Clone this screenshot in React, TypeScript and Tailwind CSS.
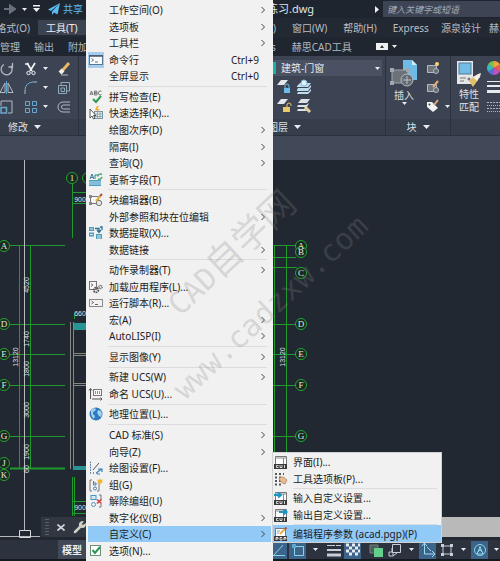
import React, { useState } from 'react';

type MenuEntry = {
  label: string;
  icon?: string;
  shortcut?: string;
  submenu?: boolean;
};

const toolsMenu: MenuEntry[][] = [
  [
    { label: '工作空间(O)', submenu: true },
    { label: '选项板', submenu: true },
    { label: '工具栏', submenu: true },
    { label: '命令行', icon: 'cmdline', shortcut: 'Ctrl+9' },
    { label: '全屏显示', shortcut: 'Ctrl+0' },
  ],
  [
    { label: '拼写检查(E)', icon: 'spell' },
    { label: '快速选择(K)...', icon: 'quickselect' },
    { label: '绘图次序(D)', submenu: true },
    { label: '隔离(I)', submenu: true },
    { label: '查询(Q)', submenu: true },
    { label: '更新字段(T)', icon: 'field' },
  ],
  [
    { label: '块编辑器(B)', icon: 'block' },
    { label: '外部参照和块在位编辑', submenu: true },
    { label: '数据提取(X)...', icon: 'extract' },
    { label: '数据链接', submenu: true },
  ],
  [
    { label: '动作录制器(T)', submenu: true },
    { label: '加载应用程序(L)...', icon: 'load' },
    { label: '运行脚本(R)...', icon: 'script' },
    { label: '宏(A)', submenu: true },
    { label: 'AutoLISP(I)', submenu: true },
  ],
  [{ label: '显示图像(Y)', submenu: true }],
  [
    { label: '新建 UCS(W)', submenu: true },
    { label: '命名 UCS(U)...', icon: 'ucs' },
  ],
  [{ label: '地理位置(L)...', icon: 'globe' }],
  [
    { label: 'CAD 标准(S)', submenu: true },
    { label: '向导(Z)', submenu: true },
    { label: '绘图设置(F)...', icon: 'drafting' },
    { label: '组(G)', icon: 'group' },
    { label: '解除编组(U)', icon: 'ungroup' },
    { label: '数字化仪(B)', submenu: true },
    { label: '自定义(C)', submenu: true },
    { label: '选项(N)...', icon: 'options' },
  ],
];

const customizeMenu: MenuEntry[][] = [
  [
    { label: '界面(I)...', icon: 'cui' },
    { label: '工具选项板(P)...', icon: 'palette' },
  ],
  [
    { label: '输入自定义设置...', icon: 'import' },
    { label: '输出自定义设置...', icon: 'export' },
  ],
  [{ label: '编辑程序参数 (acad.pgp)(P)', icon: 'pgp' }],
];

// The small window with a "CUI" style footer shared by the customize icons
const CuiFrame = () => (
  <>
    <path d="M2.500 9V1.500h11V9" fill="#fff" stroke="#777" />
    <path d="M2 3h12M10.500 3v6" stroke="#888" fill="none" />
    <rect x="1" y="9" width="13" height="5" fill="#3a3a3a" />
    <path d="M5.500 10.500H3.500v2h2M7 10v2.500h2V10M11.500 10v3" stroke="#fff" fill="none" strokeWidth=".8" />
  </>
);

const menuIcons: Record<string, React.ReactNode> = {
  cmdline: (
    <>
      <rect x="1.500" y="2.500" width="13" height="9" fill="#f7fafc" stroke="#5b7893" />
      <path d="M1 3h14" stroke="#40566c" strokeWidth="1.500" />
      <path d="m3.500 5.500 2 1.500-2 1.500M7 9h3" stroke="#444" fill="none" strokeWidth=".8" />
    </>
  ),
  spell: (
    <>
      <path d="m2 5 1.500-4L5 5M2.500 4h2M6.500 1v4h1.800a1 1 0 0 0 0-2H6.500h1.500a1 1 0 0 0 0-2ZM13.500 1.500a2 2 0 1 0 0 3" stroke="#666" fill="none" strokeWidth=".9" />
      <path d="m5 9 3 3 5-6" stroke="#2f9a56" strokeWidth="2" fill="none" />
    </>
  ),
  quickselect: (
    <>
      <path d="m9 0-2 4h2L7 7l5-4H9l2-3Z" fill="#f6a821" />
      <rect x="6.500" y="5.500" width="8" height="7" fill="#e3ebee" stroke="#7d97a0" />
      <path d="M7 8h8M7 10.500h8M9.500 6v7M12 6v7" stroke="#7d97a0" strokeWidth=".7" />
      <path d="M2 3v9l2-2 1.500 3 1.500-.8L5.500 9.500H8Z" fill="#fff" stroke="#333" strokeWidth=".8" />
    </>
  ),
  field: (
    <>
      <path d="M1 7h12v6H1Z" fill="#4da0c4" />
      <path d="M1 9h12M1 11h12" stroke="#d9eef6" strokeWidth=".8" />
      <path d="m2 6 2-5 2 5M3 4.500h2M7 6V2h3" stroke="#387c99" fill="none" />
      <path d="M9.500 3.500A3 3 0 0 1 14 1.500M14 4a3 3 0 0 1-4 2" stroke="#47a86b" strokeWidth="1.500" fill="none" />
    </>
  ),
  block: (
    <>
      <path d="M2.500 3.500h8v7h-8Z" fill="#f5f5f5" stroke="#777" />
      <path d="M1 2h3v3H1ZM1 9h3v3H1Z" fill="#888" />
      <circle cx="11" cy="10" r="2.700" fill="#dfe6ea" stroke="#777" />
      <path d="m8 8 4.500-5" stroke="#e0b43a" strokeWidth="2" />
      <path d="m12 3 2-2" stroke="#b0484c" strokeWidth="2" />
    </>
  ),
  extract: (
    <>
      <path d="M1 1h5v4H1ZM1 6.500h5v4H1ZM8 8h6v5H8Z" fill="#4f9cba" />
      <path d="M7 2.500h4v3M9 4l2 2.500L13 4M12 1h2v3" stroke="#2a6f8e" fill="none" strokeWidth="1.300" />
      <path d="M2 3h3M2 8.500h3M9 10h4M9 12h4M5 12l2 1" stroke="#e8f5fa" strokeWidth=".9" />
    </>
  ),
  load: (
    <>
      <rect x="1.500" y="1.500" width="7" height="8" fill="#f7f7f7" stroke="#777" />
      <path d="m3 3.500 2 1.500-2 1.500" stroke="#555" fill="none" strokeWidth=".8" />
      <circle cx="8" cy="10" r="2.300" fill="none" stroke="#555" strokeWidth="1.800" strokeDasharray="1.500 .6" />
      <circle cx="12.500" cy="7" r="1.600" fill="none" stroke="#666" strokeWidth="1.400" strokeDasharray="1 .5" />
    </>
  ),
  script: (
    <>
      <rect x="1.500" y="3.500" width="13" height="7" fill="#f2f2f2" stroke="#888" />
      <path d="m3.500 5 2 1.500-2 1.500M7 8.500h3" stroke="#444" fill="none" strokeWidth=".8" />
    </>
  ),
  ucs: (
    <>
      <path d="M2.500 12V2M1 3.500 2.500 1.500 4 3.500M4 12h10M12.500 10.500l1.500 1.500-1.500 1.500" stroke="#555" fill="none" />
      <rect x="5.500" y="2.500" width="8" height="6" fill="#fafafa" stroke="#777" />
      <path d="M7.500 4v3M9.500 4v3M11.500 4v3" stroke="#777" strokeWidth=".8" />
    </>
  ),
  globe: (
    <>
      <circle cx="8" cy="7" r="6.500" fill="#2f78bd" />
      <path d="M3 3c2-2 4-2 5-1l-1 2-2 1v2l2 2-1 3-2-2-1-3ZM10 3l3 1 1 3-1 3-2-1-2-3Z" fill="#9ed2ea" />
    </>
  ),
  drafting: (
    <>
      <path d="M2 1.500h1M2 4h1M2 6.500h1M2 9h1M2 12h1M5 12h1M8 12h1" stroke="#3f6b94" strokeWidth="1.300" />
      <path d="m5 9 6-7" stroke="#555" />
      <path d="M9 11.500 13.500 8M10 8h4v3M9 13h3" stroke="#3880b3" strokeWidth="1.200" fill="none" />
    </>
  ),
  group: (
    <>
      <path d="M4 2H2v11h2M11 5v8H9" stroke="#777" fill="none" />
      <path d="M5.500 3v4h2.500V5H5.500" stroke="#4f7fa3" fill="none" />
      <circle cx="7" cy="10.500" r="1.500" stroke="#4f7fa3" fill="none" />
      <path d="m12 0 .8 2 2.200-.5-1.200 2L15 5l-2-.2L12 7l-.8-2.200L9 5l1.200-1.500L9 1.500l2.200.5Z" fill="#f0b32c" />
    </>
  ),
  ungroup: (
    <>
      <path d="M11 1h2v5M13 10v3h-2" stroke="#777" fill="none" />
      <rect x="3" y="1.500" width="5" height="4" fill="#d5e9f7" stroke="#4993c8" />
      <circle cx="5.500" cy="10.500" r="2" fill="none" stroke="#5c8fb5" />
      <path d="m9 5.500 4.500 4M13.500 5.500l-4.500 4" stroke="#cf3d44" strokeWidth="1.600" />
    </>
  ),
  options: (
    <>
      <rect x="2.500" y="1.500" width="10" height="10" fill="#fff" stroke="#6b8f79" />
      <path d="m4.500 6 2.500 3 5-6" stroke="#2c9454" strokeWidth="2" fill="none" />
    </>
  ),
  cui: <CuiFrame />,
  palette: (
    <>
      <path d="M2 2h2M6 2h2M2 5.500h2M6 5.500h2M2 9h2M6 9h2M2 12.500h2M6 12.500h2M10 2h1" stroke="#555" strokeWidth="1.800" />
      <path d="M6 6c3-2 5-1 8 2l-2 4C9 11 7 10 6 6Z" fill="#e6bd93" stroke="#a7794d" strokeWidth=".7" />
    </>
  ),
  import: (
    <>
      <CuiFrame />
      <path d="M1 4h6M5 1.500 8 4 5 6.500" stroke="#1f95c2" strokeWidth="2" fill="none" />
    </>
  ),
  export: (
    <>
      <CuiFrame />
      <path d="M6 4h6M10.500 1.500 13.500 4l-3 2.500" stroke="#1f95c2" strokeWidth="2" fill="none" />
    </>
  ),
  pgp: (
    <>
      <path d="M2.500 9V1.500h10V9" fill="#fff" stroke="#777" />
      <rect x="1" y="9" width="13" height="5" fill="#3a3a3a" />
      <path d="M3 13v-2.500h2V12H3M9 10.500H7V13h2v-1.500M11 13v-2.500h2V12h-2" stroke="#fff" fill="none" strokeWidth=".8" />
      <path d="m7 7 5-5" stroke="#e3b04b" strokeWidth="2" />
      <path d="m12 2 1.500-1.500" stroke="#b8434a" strokeWidth="2" />
      <path d="M4 4h3M4 6h2" stroke="#999" />
    </>
  ),
};

const Caret = ({ small }: { small?: boolean }) => (
  <svg className={small ? 'h-[3px] w-[5px] shrink-0' : 'h-1 w-[7px] shrink-0'} viewBox="0 0 7 4" aria-hidden="true">
    <path d="M0 0h7L3.500 4Z" fill="#e8ebef" />
  </svg>
);

type MenuProps = { groups: MenuEntry[][]; active: string; onSelect: (label: string) => void; name: string };

const MenuList: React.FC<MenuProps & { rowClass: string; gapClass: string; textClass: string }> = ({
  groups, active, onSelect, name, rowClass, gapClass, textClass,
}) => (
  <div role="menu" aria-label={name} className="flex min-h-0 flex-1 flex-col">
    {groups.map((group, i) => (
      <React.Fragment key={i}>
        {i > 0 && (
          <div role="separator" className={`flex items-center pr-1 pl-5 ${gapClass}`}>
            <div className="h-px w-full bg-[#dcdcdc]" />
          </div>
        )}
        {group.map((entry) => (
          <button
            key={entry.label}
            role="menuitem"
            onClick={() => onSelect(entry.label)}
            className={`flex w-full items-center text-left text-[#1c1c1c] ${rowClass} ${active === entry.label ? 'bg-[#91c9f7]' : ''}`}
          >
            <span className={`flex h-4 w-4 shrink-0 items-center justify-center ${entry.icon === 'cmdline' ? 'bg-[#a6cdee]' : ''}`}>
              {entry.icon && <svg className="h-[14px] w-4" viewBox="0 0 16 14">{menuIcons[entry.icon]}</svg>}
            </span>
            <span className={`flex-1 whitespace-nowrap ${textClass}`}>{entry.label}</span>
            {entry.shortcut && <span className="pr-3">{entry.shortcut}</span>}
            {entry.submenu && (
              <svg className="mr-1 h-2 w-2" viewBox="0 0 8 8"><path d="m2.500 1 3 3-3 3" fill="none" stroke="#444" /></svg>
            )}
          </button>
        ))}
      </React.Fragment>
    ))}
  </div>
);

const TitleBar = () => (
  <header className="flex h-[18px] shrink-0 items-center bg-[#1f252e] text-[#dfe3e8]">
    <div className="flex w-[267px] shrink-0 items-center gap-[6px] pl-1">
      <svg className="h-3 w-3" viewBox="0 0 12 12"><path d="M0 6h8M6 2.500 11 6 6 9.500Z" fill="#69717d" stroke="#69717d" strokeWidth="2" /></svg>
      <div className="flex items-center gap-[6px]">
        <Caret small />
        <svg className="h-2 w-[7px]" viewBox="0 0 7 8"><path d="M0 0h7v1.500H0ZM0 3h7L3.500 7Z" fill="#eef0f2" /></svg>
      </div>
      <button className="flex items-center gap-[3px] pl-[2px] text-[#5cbcf2]">
        <svg className="h-3 w-3" viewBox="0 0 12 12"><path d="M12 0 0 6.500l3 1.500Zm0 0L4 8.500V12l2-2.500 3.500 2Z" fill="#5cbcf2" /></svg>
        共享
      </button>
    </div>
    <span className="w-[108px] shrink-0 text-[11px]">练习.dwg</span>
    <svg className="mr-1 h-[7px] w-1 shrink-0" viewBox="0 0 4 7"><path d="m0 0 4 3.500L0 7Z" fill="#eef0f2" /></svg>
    <input
      aria-label="搜索"
      placeholder="键入关键字或短语"
      className="h-4 min-w-0 flex-1 bg-[#3d4454] px-1 text-[9px] italic outline-none placeholder:text-[#a5acb8]"
    />
  </header>
);

const MenuBar = () => (
  <nav className="flex h-[19px] shrink-0 items-center bg-[#222933] text-[#b9bec6]">
    <div className="flex h-full w-[273px] shrink-0 items-center">
      <button className="flex w-[38px] shrink-0 justify-end pr-2 whitespace-nowrap">格式(O)</button>
      <button className="h-[15px] w-12 bg-[#3b4351] pl-2 text-left text-[#eceff2]">工具(T)</button>
    </div>
    <div className="flex gap-4 whitespace-nowrap">
      <button>)</button>
      <button>窗口(W)</button>
      <button>帮助(H)</button>
      <button>Express</button>
      <button className="-ml-1">源泉设计</button>
      <button className="-ml-2">赫思CAD工具</button>
    </div>
  </nav>
);

const RibbonTabs = () => (
  <nav className="flex h-[19px] shrink-0 items-center bg-[#20262f] text-[#b2b8c1]">
    <div className="flex w-[271px] shrink-0 gap-[14px]">
      <button>管理</button>
      <button>输出</button>
      <button>附加模块</button>
    </div>
    <div className="flex items-center gap-4 whitespace-nowrap">
      <button>s</button>
      <button>赫思CAD工具</button>
    </div>
    <button aria-label="最小化" className="ml-6 flex h-[7px] w-3 items-center justify-center bg-[#eef0f2]">
      <svg className="h-[3px] w-1" viewBox="0 0 4 3"><path d="M0 3h4L2 0Z" fill="#333" /></svg>
    </button>
    <div className="pl-1"><Caret small /></div>
  </nav>
);

const PanelLabel = ({ children, className = '' }: { children: React.ReactNode; className?: string }) => (
  <div className={`flex h-4 items-center gap-[6px] bg-[#363d4b] text-[#dde1e6] ${className}`}>
    <span>{children}</span>
    <Caret />
  </div>
);

const ToolButton = ({ children, label, caret }: { children: React.ReactNode; label: string; caret?: boolean }) => (
  <button aria-label={label} className="flex items-center gap-[5px]">
    <svg className="h-[14px] w-[14px] shrink-0" viewBox="0 0 14 14" fill="none" stroke="#b3bac4">{children}</svg>
    {caret && <Caret small />}
  </button>
);

const Ribbon = () => (
  <section className="flex shrink-0 border-b border-[#2b313d] bg-[#3c4352] text-[#dde1e6]">
    <div className="flex w-[79px] shrink-0 flex-col border-r border-[#2b313d]">
      <div className="grid h-[63px] grid-cols-[24px_33px_22px] grid-rows-3 pt-[3px] pb-[3px]">
        <ToolButton label="旋转">
          <path d="M4 2.500a5.500 5.500 0 1 0 7 1.500M12.500 1v4H8.500" strokeWidth="1.300" />
        </ToolButton>
        <ToolButton label="修剪" caret>
          <path d="M3 1l5 8M11 1 6 9M1 2h4" stroke="#f0f1f3" strokeWidth="1.700" />
          <circle cx="4.500" cy="11" r="1.700" stroke="#f0f1f3" /><circle cx="9.500" cy="11" r="1.700" stroke="#f0f1f3" />
        </ToolButton>
        <ToolButton label="删除">
          <path d="m5 9 7-8" stroke="#e9b765" strokeWidth="3" /><path d="m3 11 3-3" stroke="#f4efe8" strokeWidth="4" /><path d="M4 13h7" />
        </ToolButton>
        <ToolButton label="镜像">
          <path d="M5 2v9.500H0ZM8 2v9.500h5Z" /><path d="M6.500 0v13" stroke="#5da4cf" />
        </ToolButton>
        <ToolButton label="圆角" caret>
          <path d="M1 13V9M9 1h4" /><path d="M1 9a8 8 0 0 1 8-8" stroke="#67a9cf" />
        </ToolButton>
        <ToolButton label="分解">
          <path d="M1.500 4.500h8v8h-8ZM4 4V1.500h8.500V10H10M4 7h3.500v3.500H4Z" stroke="#8faabb" />
        </ToolButton>
        <ToolButton label="缩放">
          <path d="M1 6V1h11v12H8" /><path d="M1 7.500h5.500V13H1Z" stroke="#67a9cf" strokeWidth="1.500" />
        </ToolButton>
        <ToolButton label="阵列" caret>
          <path d="M1.500 1.500h4v4h-4ZM8.500 1.500h4v4h-4ZM1.500 8.500h4v4h-4ZM8.500 8.500h4v4h-4Z" stroke="#67a9cf" />
        </ToolButton>
        <ToolButton label="偏移">
          <path d="M13 2H6a5 5 0 0 0 0 10h7M13 5H6.500a2 2 0 0 0 0 4H13" />
        </ToolButton>
      </div>
      <PanelLabel className="pl-2">修改</PanelLabel>
    </div>

    <div className="flex w-[307px] shrink-0 flex-col border-r border-[#2b313d]">
      <div className="h-[63px] pt-1 pl-[188px]">
        <div className="relative mr-[3px]">
          <select aria-label="图层" className="h-4 w-full appearance-none bg-[#4a5162] pl-[14px] text-[#e6e9ed] outline-none">
            <option>建筑-门窗</option>
          </select>
          <span className="pointer-events-none absolute top-[2px] left-[3px] h-3 w-[6px] bg-[#12b5a6]" />
          <span className="pointer-events-none absolute inset-y-0 right-[2px] flex items-center"><Caret small /></span>
        </div>
        <div className="grid w-[44px] grid-cols-2 gap-x-[6px] gap-y-[5px] pt-1 pl-[10px] [&_svg]:overflow-visible">
          <ToolButton label="锁定">
            <path d="M0 5 4 0h7L7 5Z" fill="#e3e6ea" stroke="none" /><path d="M7 8h6v5H7Z" fill="#69bce9" stroke="none" /><path d="M8 8V6a2 2 0 0 1 4 0v2" stroke="#69bce9" />
          </ToolButton>
          <ToolButton label="图层状态">
            <path d="m0 6 3-3h11l-3 4H0ZM0 10l1-2h10l3-3v2l-3 4H0ZM0 14l1-2h10l3-3v2l-3 3Z" fill="#bfdcee" stroke="none" /><circle cx="7" cy="3" r="3" fill="#e9eff3" stroke="#74bfe5" />
          </ToolButton>
          <ToolButton label="解锁">
            <path d="M0 5 4 0h7L7 5Z" fill="#e3e6ea" stroke="none" /><path d="M6 8h7v5H6Z" fill="#ebc76b" stroke="none" /><path d="M10 8V6a2 2 0 0 1 4 0v1" stroke="#ebc76b" />
          </ToolButton>
          <ToolButton label="匹配图层">
            <path d="m1 4 3-4h9l-3 4ZM0 8l1-2h8l3-2-2 4ZM0 12l1-2h7l2 2Z" fill="#dde2e6" stroke="none" /><path d="m8 8 5 5" stroke="#e5d1a0" strokeWidth="3" />
          </ToolButton>
        </div>
      </div>
      <PanelLabel className="pl-[189px]">图层</PanelLabel>
    </div>

    <div className="flex w-[65px] shrink-0 flex-col border-r border-[#2b313d]">
      <div className="flex h-[63px] items-start gap-2 pt-1 pl-1">
        <button className="flex w-[28px] flex-col items-center">
          <svg className="h-7 w-7" viewBox="0 0 28 28">
            <path d="M13 0h9l5 5v15H13Z" fill="#6fbbe8" /><path d="M22 0v5h5Z" fill="#d2ebf9" />
            <path d="M2 10h16v13H2Z" fill="#6d727a" stroke="#a2a7ae" /><path d="M0 8h4v4H0ZM0 21h4v4H0ZM16 8h4v4h-4Z" fill="#a2a7ae" />
            <circle cx="17" cy="20" r="6" fill="#666c74" stroke="#b9bec5" /><path d="M13 20h8M17 16v8" stroke="#b9bec5" />
          </svg>
          <span>插入</span>
          <Caret small />
        </button>
        <div className="flex flex-col gap-[5px] pt-[1px]">
          <ToolButton label="创建块">
            <path d="M1.500 4.500h9v7h-9Z" fill="#70757c" /><circle cx="10" cy="10" r="2.500" fill="#656b73" /><circle cx="11" cy="3" r="2" fill="#ffd36b" stroke="none" />
          </ToolButton>
          <ToolButton label="编辑块">
            <path d="M1.500 4.500h9v7h-9Z" fill="#70757c" /><circle cx="10" cy="10" r="2.500" fill="#656b73" /><path d="m7 7 5-6" stroke="#e6ad75" strokeWidth="2" />
          </ToolButton>
          <ToolButton label="编辑属性" caret>
            <path d="M1 3h5l6 6-5 4-6-5Z" fill="#eff1f2" stroke="none" /><circle cx="3.500" cy="5.500" r="1" fill="#444" stroke="none" /><path d="m8 6 4-5" stroke="#e3ad7c" strokeWidth="2" />
          </ToolButton>
        </div>
      </div>
      <PanelLabel className="justify-center">块</PanelLabel>
    </div>

    <div className="flex min-w-0 flex-1 flex-col">
      <div className="flex h-[63px] gap-1 overflow-hidden pt-1 pl-[5px]">
        <button className="flex w-[26px] shrink-0 flex-col items-center leading-[13px]">
          <svg className="h-7 w-[26px] shrink-0" viewBox="0 0 26 28">
            <rect x="1" y="1" width="16" height="23" fill="#e5e7e9" /><rect x="3" y="3" width="12" height="11" fill="#73bce6" stroke="#507d99" />
            <path d="M4 18h6M4 21h4" stroke="#777" /><circle cx="13" cy="19" r="1.500" fill="#777" />
            <path d="m13 21 5-5 4 4-5 7Z" fill="#e4bf69" /><path d="m17 17 5-3 3-1-1 4-3 4Z" fill="#f5f1e8" />
          </svg>
          <span>特性</span>
          <span>匹配</span>
        </button>
        <svg className="h-[54px] w-[18px] shrink-0" viewBox="0 0 18 54">
          <path d="M8 8V1a7 7 0 0 1 6 3.500Z" fill="#f1a43a" /><path d="M8 8l6-3.500a7 7 0 0 1 0 7Z" fill="#ee5b4c" /><path d="m8 8 6 3.500A7 7 0 0 1 8 15Z" fill="#c152b8" />
          <path d="M8 8v7a7 7 0 0 1-6-3.500Z" fill="#596ed8" /><path d="m8 8-6 3.500a7 7 0 0 1 0-7Z" fill="#39b9c7" /><path d="M8 8 2 4.500A7 7 0 0 1 8 1Z" fill="#6dc653" />
          <path d="M1 21.500h17" stroke="#e8ebee" /><path d="M1 26h17" stroke="#e8ebee" strokeWidth="2" /><path d="M1 31.500h17" stroke="#e8ebee" strokeWidth="3" />
          <path d="M1 42.500h17M1 48.500h17" stroke="#aeb5be" strokeDasharray="2 1" /><path d="M1 45.500h17M1 51.500h17" stroke="#aeb5be" strokeDasharray="1 1" />
        </svg>
      </div>
      <div className="h-4 bg-[#363d4b]" />
    </div>
  </section>
);

const axisBubbles: [string, number, number][] = [
  ['A', 4, 246], ['D', 4, 324], ['E', 4, 354], ['F', 4, 385], ['G', 4, 436], ['J', 4, 463], ['K', 4, 475],
  ['1', 72, 178], ['2', 88, 178],
  ['A', 301, 246], ['B', 301, 252], ['C', 301, 273], ['D', 301, 324], ['E', 301, 354], ['F', 301, 385], ['G', 301, 436],
];

const verticalDims: [string, number, number][] = [
  ['4520', 29, 285], ['1740', 29, 339], ['1800', 29, 369], ['3000', 29, 410], ['1900', 29, 452], ['60', 29, 469],
  ['13120', 18, 357], ['13120', 285, 357],
];

const Drawing = () => (
  <svg className="absolute inset-0 h-full w-full" aria-hidden="true">
    <g transform="translate(0 -160)">
      <g stroke="#1f9a2c" fill="none">
        <path d="M19.500 245v223M30.500 245v223M10 245.500h55M10 324.500h55M10 354.500h55M10 385.500h55M10 436.500h55" />
        <path d="M10 468.500h55" strokeWidth="2" />
        <path d="M72.500 184v54M72 192.500h16M72 203.500h16M74.500 313v6M72.500 477v39M74.500 477v39M72 501.500h16M72 513.500h16M72.500 524v12" />
        <path d="M274.500 245v210M286.500 245v210M273 245.500h23M273 257.500h23M273 267.500h23l3 2M273 324.500h23M273 354.500h23M273 385.500h23M273 436.500h23" />
      </g>
      <path d="M70.500 322v147M73.500 322v147M73 353.500h14M73 355.500h14M73 383.500h14M73 385.500h14" stroke="#85887f" fill="none" />
      <path d="M74 323h12v7H74ZM73 466h13v4H73Z" fill="#2a9494" />
      <g fill="#18291f" stroke="#22a630">
        {axisBubbles.map(([name, x, y]) => <circle key={`${name}${x}`} cx={x} cy={y} r="5.500" />)}
      </g>
      <g fill="#e3eae3" fontSize="9" textAnchor="middle" className="font-['Liberation_Serif',serif]">
        {axisBubbles.map(([name, x, y]) => <text key={`${name}${x}`} x={x} y={y + 3}>{name}</text>)}
      </g>
      <path d="M24.500 160v370M0 536.500h40" stroke="#b5b9be" fill="none" />
      <path d="M19.500 530.500h11v7h-11Z" fill="none" stroke="#d7d9dc" />
      <g fill="#dfe2e5" fontSize="7" textAnchor="middle" className="font-['Liberation_Sans',sans-serif]">
        {verticalDims.map(([value, x, y]) => (
          <text key={`${value}${x}`} transform={`translate(${x} ${y}) rotate(-90)`}>{value}</text>
        ))}
        <text x="80" y="202">900</text>
        <text x="80" y="316">660</text>
        <text x="80" y="510">900</text>
      </g>
    </g>
  </svg>
);

const CommandLine = () => (
  <div className="relative mb-[3px] ml-[41px] flex h-5 items-center bg-[#303741]">
    <div className="flex h-full w-[46px] shrink-0 items-center gap-2 pl-1">
      <svg className="h-4 w-1" viewBox="0 0 4 16"><path d="M1 0v16M3 0v16" stroke="#7f868f" strokeDasharray="1 2" /></svg>
      <button aria-label="关闭">
        <svg className="h-[7px] w-2" viewBox="0 0 8 7"><path d="m.5.5 7 6M7.500.5l-7 6" stroke="#d4d7da" strokeWidth="1.600" /></svg>
      </button>
      <button aria-label="自定义">
        <svg className="h-[14px] w-[14px]" viewBox="0 0 14 14">
          <path d="m2 12 6-6" stroke="#cdd2c5" strokeWidth="2.500" strokeLinecap="round" /><path d="M12.500 3 10 5 8.800 4 11 1.500a3.500 3.500 0 1 0 1.500 1.500Z" fill="#cdd2c5" />
        </svg>
      </button>
    </div>
    <input aria-label="命令" className="h-full min-w-0 flex-1 bg-[#b9b9b9] outline-none" />
  </div>
);

const StatusToggle = ({ children, label, on }: { children: React.ReactNode; label: string; on?: boolean }) => (
  <button aria-label={label} aria-pressed={!!on} className={`flex h-[18px] w-[17px] shrink-0 items-center justify-center ${on ? 'bg-[#3c648a]' : ''}`}>
    <svg className="h-[14px] w-[14px]" viewBox="0 0 14 14" fill="none" stroke="#c7cfd8">{children}</svg>
  </button>
);

const StatusBar = () => (
  <footer className="flex h-[21px] shrink-0 items-center overflow-hidden border-b-2 border-[#14181f] bg-[#2c333f]">
    <div className="flex h-full w-[270px] shrink-0 pl-[58px]">
      <button className="h-full w-7 bg-[#414858] font-bold text-[#eceff2]">模型</button>
    </div>
    <div className="flex items-center gap-[2px]">
      <StatusToggle label="极轴追踪" on><path d="M1 12.500h12M2 12l9-10" stroke="#8ad3e8" /></StatusToggle>
      <StatusToggle label="对象捕捉" on><path d="M3.500 3.500h9v9h-9Z" stroke="#8ad3e8" /><path d="M1 1h4v4H1Z" fill="#5fa7d0" stroke="none" /></StatusToggle>
      <div className="flex w-[15px] justify-center"><Caret small /></div>
      <StatusToggle label="线宽"><path d="M0 2.500h8M9 2.500h5" /><path d="M0 7h14" strokeWidth="2" /><path d="M0 12h14" strokeWidth="3" /></StatusToggle>
      <StatusToggle label="透明度" on>
        <path d="M0 2h14M0 8h14" stroke="#e7ebef" strokeWidth="3" strokeDasharray="3 3" /><path d="M3 5h11M3 11h11" stroke="#e7ebef" strokeWidth="3" strokeDasharray="3 3" />
      </StatusToggle>
      <div className="flex pl-1">
        <StatusToggle label="选择循环"><path d="M1 2h8v8H1Z" fill="#505b5f" stroke="#6f837d" /><path d="M5 5h9v9H5Z" fill="#62d08b" stroke="none" /></StatusToggle>
      </div>
      <StatusToggle label="三维对象捕捉"><path d="M4.500 1.500h8v8h-8ZM1 9h4v4H1Z" /><path d="M4 5v4M9 10l-4 3" /></StatusToggle>
      <div className="flex w-3 justify-center"><Caret small /></div>
      <StatusToggle label="动态UCS" on><path d="M3.500 0v11H14M1 3l2.500-3L6 3M11 8l3 3-3 3M6 4l4 4" stroke="#9bdcf0" /></StatusToggle>
      <StatusToggle label="选择过滤"><path d="M3 3h8v8H3Z" /><path d="M1 1h3v3H1ZM10 1h3v3h-3ZM1 10h3v3H1ZM10 10h3v3h-3Z" fill="#c7cfd8" stroke="none" /></StatusToggle>
      <div className="flex w-3 justify-center"><Caret small /></div>
      <StatusToggle label="小控件" on><circle cx="7" cy="7" r="5.500" stroke="#8ad3e8" /><path d="M7 3v4l4 4M7 7l-4 4M4 11h6L7 4Z" stroke="#8ad3e8" /></StatusToggle>
      <div className="flex w-3 justify-center"><Caret small /></div>
    </div>
  </footer>
);

const Watermark = () => (
  <svg className="pointer-events-none absolute inset-0 h-full w-full font-['DejaVu_Sans_Mono','Noto_Sans_CJK_SC',monospace]" aria-hidden="true">
    <g fill="#858585" fillOpacity=".26">
      <text transform="translate(180 317) rotate(-43)" fontSize="30">CAD<tspan fontSize="36">自学网</tspan></text>
      <text transform="translate(185 401) rotate(-43)" fontSize="30">www.cadzxw.com</text>
    </g>
  </svg>
);

const App: React.FC = () => {
  const [active, setActive] = useState<string>('自定义(C)');
  const [activeSub, setActiveSub] = useState<string>('编辑程序参数 (acad.pgp)(P)');

  return (
    <div className="relative flex h-screen min-h-[540px] w-full flex-col overflow-hidden bg-[#212831] font-['Noto_Sans','Noto_Sans_CJK_SC',sans-serif] text-[10px] leading-[14px]">
      <TitleBar />
      <MenuBar />
      <RibbonTabs />
      <Ribbon />
      <div className="h-6 shrink-0 bg-[#414858]" />
      <main className="relative flex min-h-0 flex-1 flex-col justify-end">
        <Drawing />
        <CommandLine />
      </main>
      <StatusBar />

      {/* Tools menu, open over the workspace */}
      <div className="absolute inset-y-0 left-[86px] flex w-[187px] flex-col bg-[#f1f1f1] py-[2px] pr-[2px] pl-[2px]">
        <MenuList
          name="工具"
          groups={toolsMenu}
          active={active}
          onSelect={setActive}
          rowClass="min-h-0 flex-1"
          gapClass="h-1 shrink-0"
          textClass="pl-[5px]"
        />
      </div>
      <Watermark />
      <div className="absolute bottom-[18px] left-[272px] flex w-[170px] flex-col border border-[#d2d2d2] bg-[#f1f1f1]">
        <MenuList
          name="自定义"
          groups={customizeMenu}
          active={activeSub}
          onSelect={setActiveSub}
          rowClass="h-[17px]"
          gapClass="h-[2px]"
          textClass="pl-1"
        />
      </div>
    </div>
  );
};

export default App;
